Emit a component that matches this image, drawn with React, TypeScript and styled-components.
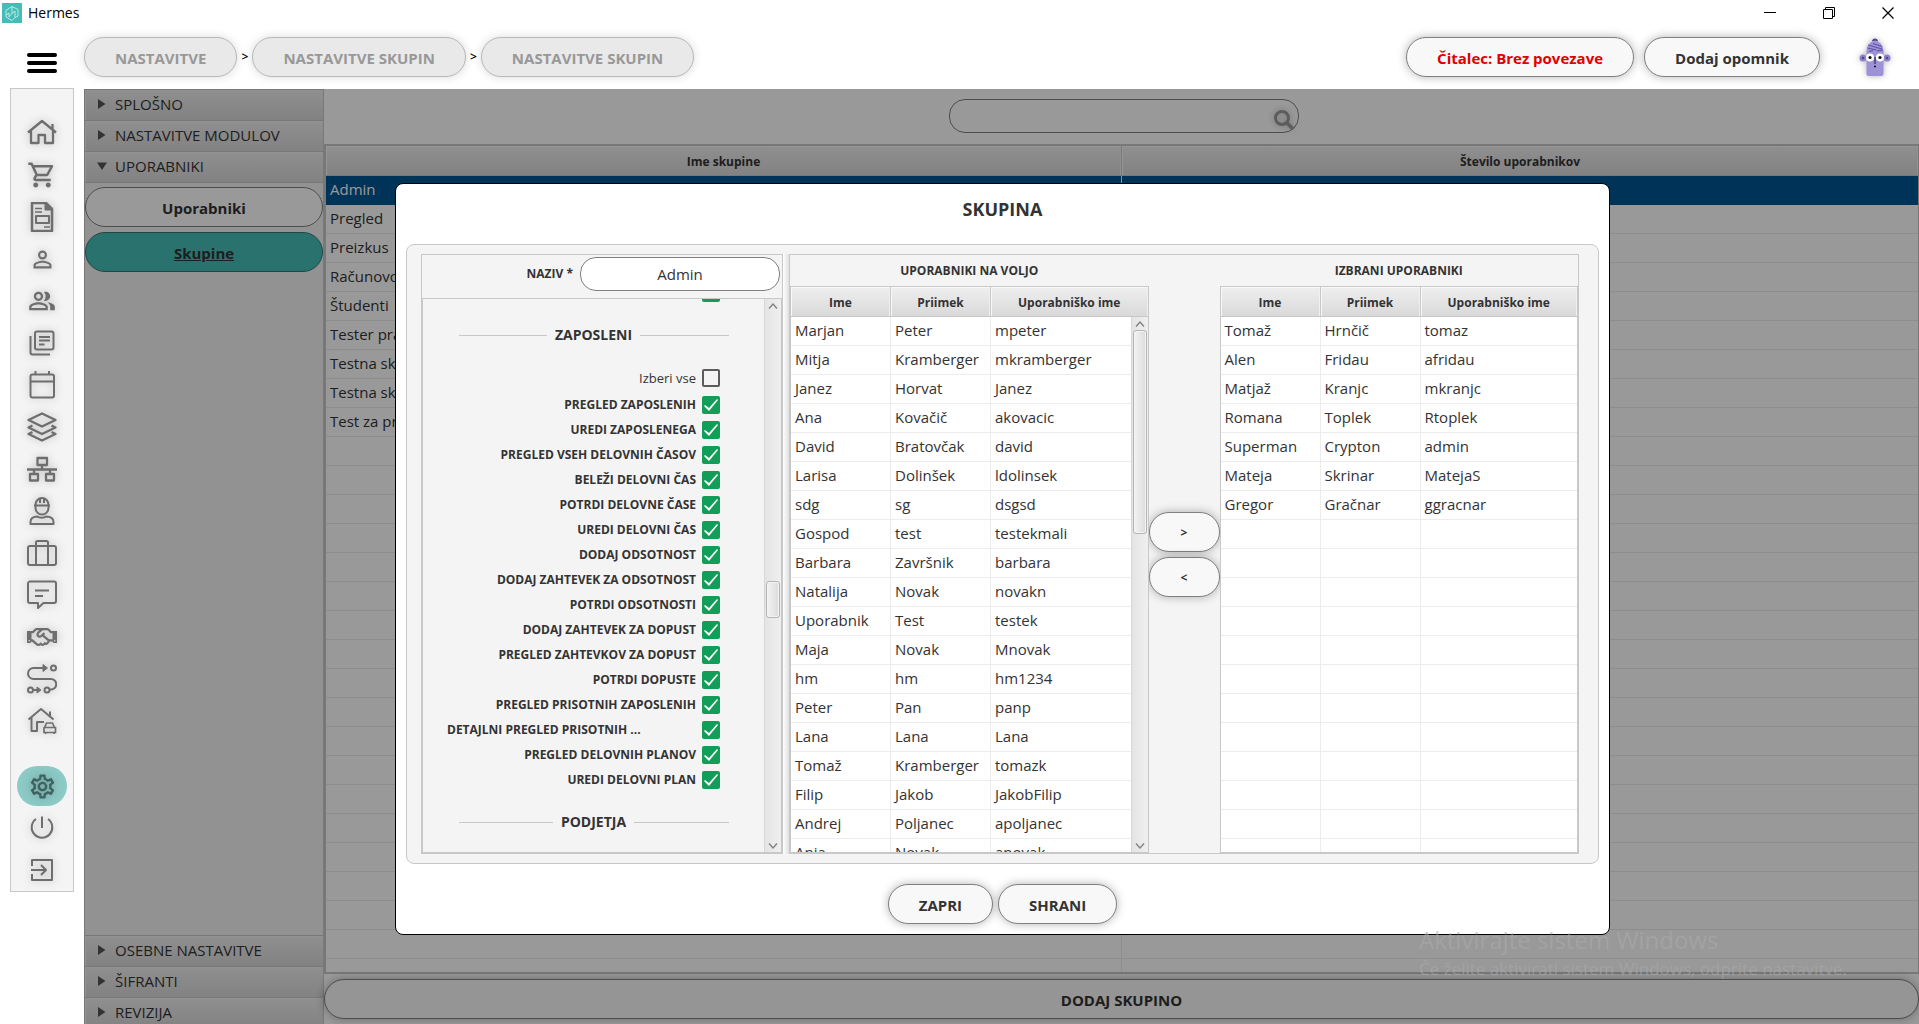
import React from "react";
import styled, { createGlobalStyle, css } from "styled-components";
import { FaRegHandshake } from "react-icons/fa";

const colors = {
  text: "#333333",
  line: "#c8c8c8",
  cellLine: "#ececec",
  panel: "#f4f4f4",
  teal: "#46beb6",
  selection: "#005593",
  green: "#129e58",
};

const headerGradient = "linear-gradient(#efefef, #d9d9d9)";

const GlobalStyle = createGlobalStyle`
  *, *::before, *::after { box-sizing: border-box; }
  body {
    margin: 0;
    background: #ffffff;
    color: ${colors.text};
    font-family: "Open Sans", "Noto Sans", sans-serif;
    font-size: 15px;
    line-height: 20px;
  }
  button, input { font: inherit; color: inherit; margin: 0; }
  button { cursor: pointer; }
`;

/* ---------- window frame ---------- */

const Window = styled.div`
  display: flex;
  flex-direction: column;
  height: 100vh;
  overflow: hidden;
`;

const TitleBar = styled.header`
  display: flex;
  align-items: center;
  justify-content: space-between;
  flex: none;
  height: 27px;
  padding: 0 25px 2px 2px;
`;

const AppName = styled.div`
  display: flex;
  align-items: center;
  gap: 6px;
  color: #000000;
  font-size: 14px;
`;

const WindowControls = styled.div`
  display: flex;
  gap: 47px;
`;

const WindowButton = styled.button`
  display: flex;
  padding: 0;
  border: 0;
  background: none;
  color: #000000;
`;

/* ---------- toolbar ---------- */

const Toolbar = styled.div`
  display: flex;
  align-items: center;
  flex: none;
  height: 62px;
  padding: 0 28px 2px 0;
`;

const MenuButton = styled.button`
  display: flex;
  flex-direction: column;
  gap: 4px;
  width: 30px;
  margin: 12px 27px 0;
  padding: 0;
  border: 0;
  background: none;
`;

const MenuBar = styled.span`
  height: 4px;
  border-radius: 2px;
  background: #000000;
`;

const Crumbs = styled.nav`
  display: flex;
  align-items: center;
  flex: 1;
`;

const CrumbArrow = styled.span`
  width: 15px;
  text-align: center;
  font-size: 12px;
  font-weight: 600;
  color: #000000;
`;

type PillTone = "normal" | "muted" | "alert" | "plain" | "active";

const pillTones = {
  normal: css`
    background: #f8f8f8;
    border-color: #808080;
    box-shadow: 0 0 10px rgba(0, 0, 0, 0.3);
  `,
  muted: css`
    background: #e9e9e9;
    border-color: #b8b8b8;
    color: #989898;
    box-shadow: 0 0 10px rgba(0, 0, 0, 0.15);
  `,
  alert: css`
    background: #f8f8f8;
    border-color: #808080;
    color: #e00000;
    box-shadow: 0 0 10px rgba(0, 0, 0, 0.3);
  `,
  plain: css`
    background: #ffffff;
    border-color: #808080;
  `,
  active: css`
    background: ${colors.teal};
    border-color: #3a7773;
    text-decoration: underline;
  `,
};

const Pill = styled.button<{ $tone?: PillTone }>`
  height: 40px;
  padding: 2px 30px 0;
  border: 1px solid;
  border-radius: 20px;
  font-weight: 700;
  white-space: nowrap;
  ${(p) => pillTones[p.$tone ?? "normal"]}
`;

const ToolbarActions = styled.div`
  display: flex;
  gap: 10px;
  margin-right: 39px;
`;

const AvatarButton = styled.button`
  display: flex;
  padding: 0;
  border: 0;
  background: none;
  filter: drop-shadow(0 0 3px rgba(0, 0, 0, 0.3));
`;

/* ---------- icon rail ---------- */

const Workspace = styled.div`
  display: flex;
  flex: 1;
  min-height: 0;
`;

const Rail = styled.nav`
  display: flex;
  flex-direction: column;
  align-items: center;
  align-self: flex-start;
  flex: none;
  width: 64px;
  margin: -1px 10px 0;
  padding-top: 23px;
  border: 1px solid ${colors.line};
  background: ${colors.panel};
`;

const RailButton = styled.button<{ $active?: boolean; $spaced?: boolean }>`
  display: flex;
  align-items: center;
  justify-content: center;
  width: 50px;
  height: 40px;
  margin: 1px 0;
  margin-top: ${(p) => (p.$spaced ? "24px" : "1px")};
  padding: 0;
  border: 0;
  border-radius: 20px;
  background: ${(p) => (p.$active ? "#8ccac6" : "none")};
  color: ${(p) => (p.$active ? "#3f6260" : "#6e6e6e")};

  svg {
    filter: drop-shadow(0 0 4px rgba(0, 0, 0, 0.25));
  }
`;

/* ---------- page behind the dialog ---------- */

const Page = styled.main`
  position: relative;
  display: flex;
  flex: 1;
  min-width: 0;
`;

const Accordion = styled.aside`
  display: flex;
  flex-direction: column;
  flex: none;
  width: 240px;
  margin-bottom: -4px;
  overflow: hidden;
  border: solid ${colors.line};
  border-width: 0 1px;
  background: ${colors.panel};
`;

const AccordionHeader = styled.button`
  display: flex;
  align-items: center;
  gap: 8px;
  flex: none;
  height: 31px;
  padding: 0 12px 2px;
  border: 0;
  border-top: 1px solid ${colors.line};
  background: ${headerGradient};
  box-shadow: inset 0 1px #f4f4f4, inset 1px 0 #f4f4f4;
  text-align: left;
`;

const AccordionBody = styled.div`
  display: flex;
  flex-direction: column;
  flex: 1;
  gap: 5px;
  padding-top: 4px;
  border-top: 1px solid ${colors.line};
`;

const GroupsPanel = styled.section`
  display: flex;
  flex-direction: column;
  flex: 1;
  min-width: 0;
  background: #ffffff;
`;

const SearchBar = styled.div`
  display: flex;
  justify-content: center;
  flex: none;
  padding: 10px 0 11px 5px;
`;

const SearchField = styled.div`
  position: relative;
  width: 350px;
`;

const RoundInput = styled.input`
  display: block;
  width: 100%;
  height: 34px;
  padding: 0 15px;
  border: 1px solid #808080;
  border-radius: 16px;
  background: #ffffff;
  text-align: center;
`;

const SearchButton = styled.button`
  position: absolute;
  right: 4px;
  top: 10px;
  display: flex;
  padding: 0;
  border: 0;
  background: none;
  color: #999999;
  filter: drop-shadow(0 0 3px rgba(0, 0, 0, 0.25));
`;

const GroupsFrame = styled.div`
  flex: 1;
  min-height: 0;
  overflow: hidden;
  border: 2px solid ${colors.line};
  border-right-width: 1px;
`;

const AddGroup = styled(Pill)`
  flex: none;
  margin: 5px 0;
`;

/* ---------- tables ---------- */

const Table = styled.table`
  width: 100%;
  table-layout: fixed;
  border-collapse: separate;
  border-spacing: 0;
  background: #ffffff;
`;

const HeadCell = styled.th<{ $width?: string }>`
  width: ${(p) => p.$width ?? "auto"};
  height: 30px;
  padding: 2px 0 0;
  border: solid ${colors.line};
  border-width: 0 1px 1px 0;
  background: ${headerGradient};
  box-shadow: inset 1px 1px #f8f8f8, inset -1px 0 #f0f0f0;
  font-size: 12px;
  font-weight: 700;
  text-align: center;

  &:last-child {
    border-right: 0;
  }
`;

const Cell = styled.td`
  height: 29px;
  padding: 0 4px 2px;
  border: solid ${colors.cellLine};
  border-width: 0 1px 1px 0;
  white-space: nowrap;

  &:last-child {
    border-right: 0;
  }
`;

const Row = styled.tr<{ $selected?: boolean }>`
  ${(p) =>
    p.$selected &&
    css`
      background: ${colors.selection};
      color: #ffffff;

      ${Cell} {
        border-bottom-color: ${colors.selection};
      }
    `}
`;

/* ---------- dialog ---------- */

const Backdrop = styled.div`
  position: absolute;
  inset: 0;
  display: flex;
  padding: 94px 309px 89px 311px;
  background: rgba(0, 0, 0, 0.4);
`;

const Dialog = styled.section`
  display: flex;
  flex-direction: column;
  flex: 1;
  min-width: 0;
  border: 1px solid #000000;
  border-radius: 8px;
  background: #ffffff;
`;

const DialogTitle = styled.h1`
  margin: 0;
  padding: 13px 0 23px;
  font-size: 18px;
  line-height: 24px;
  font-weight: 700;
  text-align: center;
`;

const GroupBox = styled.div`
  display: flex;
  flex: 1;
  min-height: 0;
  margin: 0 10px;
  padding: 9px 19px 9px 14px;
  border: 1px solid ${colors.line};
  border-radius: 8px;
  background: ${colors.panel};
`;

const RightsPane = styled.div`
  display: flex;
  flex-direction: column;
  flex: none;
  width: 362px;
  border: 1px solid ${colors.line};
`;

const Splitter = styled.div`
  flex: none;
  width: 6px;
  background: linear-gradient(90deg, #ffffff, #e0e0e0);
`;

const NameRow = styled.div`
  display: flex;
  align-items: center;
  justify-content: flex-end;
  gap: 7px;
  padding: 2px 2px 7px;
`;

const NameField = styled.div`
  width: 200px;
`;

const SmallLabel = styled.label`
  font-size: 12px;
  font-weight: 700;
`;

const ScrollPane = styled.div`
  display: flex;
  flex: 1;
  min-height: 0;
  border: 1px solid ${colors.line};
`;

const RightsList = styled.div`
  display: flex;
  flex-direction: column;
  justify-content: flex-end;
  flex: 1;
  overflow: hidden;
  padding-bottom: 20px;
`;

const SectionHeading = styled.h2`
  display: flex;
  align-items: center;
  align-self: center;
  flex: none;
  gap: 8px;
  width: 270px;
  margin: 23px 0 0;
  font-size: 14px;
  line-height: 20px;
  font-weight: 700;

  &::before,
  &::after {
    content: "";
    flex: 1;
    height: 1px;
    background: ${colors.line};
  }
`;

const CheckRows = styled.div`
  display: flex;
  flex-direction: column;
  flex: none;
  gap: 7px;
  padding: 0 44px 0 24px;
`;

const SectionRows = styled(CheckRows)`
  padding-top: 24px;
`;

const CheckRow = styled.div<{ $first?: boolean }>`
  display: flex;
  align-items: center;
  justify-content: flex-end;
  gap: 6px;
  height: 18px;
  margin-bottom: ${(p) => (p.$first ? "2px" : "0")};
`;

const CheckLabel = styled(SmallLabel)<{ $clipped?: boolean }>`
  ${(p) => p.$clipped && "flex: 1;"}
  white-space: nowrap;
`;

const PlainLabel = styled.label`
  font-size: 13px;
`;

const CheckBox = styled.input`
  appearance: none;
  flex: none;
  width: 18px;
  height: 18px;
  border: 2px solid #5c5c5c;
  border-radius: 2px;
  background: ${colors.panel};

  &:checked {
    border: 0;
    background: ${colors.green};
  }

  &:checked::after {
    content: "";
    display: block;
    height: 18px;
    background: #ffffff;
    clip-path: polygon(2px 10px, 3px 9px, 7px 12px, 15px 3px, 16px 4px, 7px 15px);
  }
`;

/* ---------- scroll bars ---------- */

const ScrollBar = styled.div`
  display: flex;
  flex-direction: column;
  flex: none;
  width: 17px;
  border-left: 1px solid #d8d8d8;
  background: linear-gradient(90deg, #e4e4e4, #efefef);
`;

const TableScrollBar = styled(ScrollBar)`
  position: absolute;
  top: 30px;
  right: 0;
  bottom: 0;
`;

const ScrollArrow = styled.button`
  display: flex;
  align-items: center;
  justify-content: center;
  flex: none;
  height: 13px;
  padding: 0;
  border: 0;
  background: none;
  color: #808080;
`;

const ScrollTrack = styled.div`
  flex: 1;
  min-height: 0;
`;

const ScrollLead = styled.div<{ $percent: number }>`
  height: ${(p) => p.$percent}%;
`;

const ScrollThumb = styled.div<{ $percent: number }>`
  height: ${(p) => p.$percent}%;
  margin: 0 1px;
  border: 1px solid #b4b4b4;
  border-radius: 3px;
  background: linear-gradient(90deg, #f2f2f2, #dcdcdc);
  box-shadow: inset 0 0 0 1px #f4f4f4;
`;

/* ---------- user transfer ---------- */

const TransferPane = styled.div`
  display: grid;
  grid-template-columns: 1fr 71px 1fr;
  flex: 1;
  min-width: 0;
  border: 1px solid ${colors.line};
`;

const UsersColumn = styled.div`
  display: flex;
  flex-direction: column;
  min-width: 0;
  min-height: 0;
`;

const UsersTitle = styled.h2`
  margin: 0;
  padding: 6px 0 5px;
  font-size: 12px;
  line-height: 20px;
  font-weight: 700;
  text-align: center;
`;

const UsersFrame = styled.div`
  position: relative;
  flex: 1;
  min-height: 0;
  overflow: hidden;
  border: 1px solid ${colors.line};
`;

const TransferButtons = styled.div`
  display: flex;
  flex-direction: column;
  justify-content: center;
  gap: 5px;
`;

const TransferButton = styled(Pill)`
  padding: 2px 0 0;
  font-size: 12px;
`;

const DialogActions = styled.div`
  display: flex;
  justify-content: center;
  gap: 5px;
  padding: 20px 0 10px;
`;

const Watermark = styled.div`
  position: absolute;
  right: 74px;
  bottom: 43px;
  width: 426px;
  color: rgba(170, 170, 170, 0.6);
  font-size: 17px;
  line-height: 24px;
  white-space: nowrap;
  pointer-events: none;
`;

const WatermarkTitle = styled.div`
  font-size: 24px;
  line-height: 34px;
`;

/* ---------- icons ---------- */

const Line = ({ children, size = 30, weight = 2 }: { children: React.ReactNode; size?: number; weight?: number }) => (
  <svg width={size} height={size} viewBox="0 0 30 30" fill="none" stroke="currentColor" strokeWidth={weight} strokeLinejoin="round" aria-hidden="true">
    {children}
  </svg>
);

const Solid = ({ d, size }: { d: string; size: number }) => (
  <svg width={size} height={size} viewBox="0 0 24 24" fill="currentColor" aria-hidden="true">
    <path d={d} />
  </svg>
);

const cartPath =
  "M15.55 13c.75 0 1.41-.41 1.75-1.03l3.58-6.49A.996.996 0 0 0 20.01 4H5.21l-.94-2H1v2h2l3.6 7.59-1.35 2.44C4.52 15.37 5.48 17 7 17h12v-2H7l1.1-2h7.45zM6.16 6h12.15l-2.76 5H8.53L6.16 6zM7 18c-1.1 0-1.99.9-1.99 2S5.9 22 7 22s2-.9 2-2-.9-2-2-2zm10 0c-1.1 0-1.99.9-1.99 2s.89 2 1.99 2 2-.9 2-2-.9-2-2-2z";
const personPath =
  "M12 5.9a2.1 2.1 0 1 1 0 4.2 2.1 2.1 0 0 1 0-4.2m0 9c2.97 0 6.1 1.46 6.1 2.1v1.1H5.9V17c0-.64 3.13-2.1 6.1-2.1M12 4C9.79 4 8 5.79 8 8s1.79 4 4 4 4-1.79 4-4-1.79-4-4-4zm0 9c-2.67 0-8 1.34-8 4v3h16v-3c0-2.66-5.33-4-8-4z";
const peoplePath =
  "M16.67 13.13C18.04 14.06 19 15.32 19 17v3h4v-3c0-2.18-3.57-3.47-6.33-3.87zM15 12c2.21 0 4-1.79 4-4s-1.79-4-4-4c-.47 0-.91.1-1.33.24a5.98 5.98 0 0 1 0 7.52c.42.14.86.24 1.33.24zM9 12c2.21 0 4-1.79 4-4s-1.79-4-4-4-4 1.79-4 4 1.79 4 4 4zm0-6c1.1 0 2 .9 2 2s-.9 2-2 2-2-.9-2-2 .9-2 2-2zm0 7c-2.67 0-8 1.34-8 4v3h16v-3c0-2.66-5.33-4-8-4zm6 5H3v-.99C3.2 16.29 6.3 15 9 15s5.8 1.29 6 2v1z";
const gearPath =
  "M19.43 12.98c.04-.32.07-.64.07-.98 0-.34-.03-.66-.07-.98l2.11-1.65c.19-.15.24-.42.12-.64l-2-3.46a.5.5 0 0 0-.61-.22l-2.49 1c-.52-.4-1.08-.73-1.69-.98l-.38-2.65A.488.488 0 0 0 14 2h-4c-.25 0-.46.18-.49.42l-.38 2.65c-.61.25-1.17.59-1.69.98l-2.49-1a.566.566 0 0 0-.18-.03c-.17 0-.34.09-.43.25l-2 3.46c-.13.22-.07.49.12.64l2.11 1.65c-.04.32-.07.65-.07.98s.03.66.07.98l-2.11 1.65c-.19.15-.24.42-.12.64l2 3.46a.5.5 0 0 0 .61.22l2.49-1c.52.4 1.08.73 1.69.98l.38 2.65c.03.24.24.42.49.42h4c.25 0 .46-.18.49-.42l.38-2.65c.61-.25 1.17-.59 1.69-.98l2.49 1c.06.02.12.03.18.03.17 0 .34-.09.43-.25l2-3.46c.12-.22.07-.49-.12-.64l-2.11-1.65zm-1.98-1.71c.04.31.05.52.05.73 0 .21-.02.43-.05.73l-.14 1.13.89.7 1.08.84-.7 1.21-1.27-.51-1.04-.42-.9.68c-.43.32-.84.56-1.25.73l-1.06.43-.16 1.13-.2 1.35h-1.4l-.19-1.35-.16-1.13-1.06-.43c-.43-.18-.83-.41-1.23-.71l-.91-.7-1.06.43-1.27.51-.7-1.21 1.08-.84.89-.7-.14-1.13c-.03-.31-.05-.54-.05-.74s.02-.43.05-.73l.14-1.13-.89-.7-1.08-.84.7-1.21 1.27.51 1.04.42.9-.68c.43-.32.84-.56 1.25-.73l1.06-.43.16-1.13.2-1.35h1.39l.19 1.35.16 1.13 1.06.43c.43.18.83.41 1.23.71l.91.7 1.06-.43 1.27-.51.7 1.21-1.07.85-.89.7.14 1.13zM12 8c-2.21 0-4 1.79-4 4s1.79 4 4 4 4-1.79 4-4-1.79-4-4-4zm0 6c-1.1 0-2-.9-2-2s.9-2 2-2 2 .9 2 2-.9 2-2 2z";

const railItems: { label: string; icon: React.ReactNode; active?: boolean; spaced?: boolean }[] = [
  {
    label: "Domov",
    icon: (
      <Line weight={2.3}>
        <path d="M1 14.500 15 3l14 11.500M25.500 11.500V6M4 12.500V25h7.500v-8h6.500v8H26V12.500" />
      </Line>
    ),
  },
  { label: "Prodaja", icon: <Solid d={cartPath} size={30} /> },
  {
    label: "Računi",
    icon: (
      <Line>
        <path d="M5 1h14l6 6v22H5z" strokeWidth="2.500" />
        <path d="M18 1v7h7z" fill="currentColor" strokeWidth="1" />
        <path d="M8 6.500h7M8 10h7M17 25h6" strokeWidth="1.500" />
        <path d="M9 14h13v7H9z" />
      </Line>
    ),
  },
  { label: "Oseba", icon: <Solid d={personPath} size={27} /> },
  { label: "Stranke", icon: <Solid d={peoplePath} size={28} /> },
  {
    label: "Dokumenti",
    icon: (
      <Line>
        <rect x="8" y="3.500" width="18.500" height="18" rx="2" />
        <path d="M3.500 8v16.500a2 2 0 0 0 2 2H23" />
        <path d="M12 9h11M12 12.500h11M12 16.500h5.500" />
      </Line>
    ),
  },
  {
    label: "Koledar",
    icon: (
      <Line>
        <rect x="3.500" y="4.500" width="23.500" height="23" rx="2" />
        <path d="M3.500 11.500h23.500M8.500 1v3.500M22 1v3.500" />
      </Line>
    ),
  },
  {
    label: "Zaloga",
    icon: (
      <Line weight={2.3}>
        <path d="M15 1.500 28.500 8 15 14.500 1.500 8z" />
        <path d="M5.500 13.500 1.500 15.500 15 22l13.500-6.500-4-2" />
        <path d="M5.500 20 1.500 22 15 28.500 28.500 22l-4-2" />
      </Line>
    ),
  },
  {
    label: "Organizacija",
    icon: (
      <Line weight={2.3}>
        <path d="M10.500 4h9.500v7h-9.500zM3 20h8v6.500H3zM19 20h8v6.500h-8zM0 15.500h30M15 11v4.500M7 15.500V20M23 15.500V20" />
      </Line>
    ),
  },
  {
    label: "Delavci",
    icon: (
      <Line>
        <path d="M8.500 10v2a6.500 6.500 0 0 0 13 0v-2M7 9.500h16M8.500 9a6.500 7 0 0 1 13 0M13 2v5M17 2v5" />
        <path d="M3.500 28v-2c0-4 3-5.500 7-5.500 1.500 1.500 7 1.500 8.500 0 4 0 7.500 1.500 7.500 5.500v2z" />
      </Line>
    ),
  },
  {
    label: "Projekti",
    icon: (
      <Line>
        <rect x="1" y="8" width="28" height="19" rx="2" />
        <path d="M9 27V4.500a1.500 1.500 0 0 1 1.500-1.500h9a1.500 1.500 0 0 1 1.500 1.500V27" />
      </Line>
    ),
  },
  {
    label: "Sporočila",
    icon: (
      <Line>
        <path d="M3 1.500h24a2 2 0 0 1 2 2V21a2 2 0 0 1-2 2H16.500L11 28v-5H3a2 2 0 0 1-2-2V3.500a2 2 0 0 1 2-2z" />
        <path d="M8 10.500h14M8 16h8" />
      </Line>
    ),
  },
  { label: "Pogodbe", icon: <FaRegHandshake size={30} /> },
  {
    label: "Procesi",
    icon: (
      <Line>
        <circle cx="26.500" cy="4" r="2.500" />
        <circle cx="3.500" cy="26" r="2.500" />
        <circle cx="20" cy="26" r="2.500" />
        <path d="M16 4H6.500a5.500 5.500 0 0 0 0 11H24a5 5 0 0 1 0 10.500h-1.500M7 26h3" />
        <path d="M16 .5 20.500 4 16 7.500zM10 23l4 3-4 3z" fill="currentColor" strokeWidth="1" />
      </Line>
    ),
  },
  {
    label: "Najem",
    icon: (
      <Line>
        <path d="M1.500 13.500 14 3l12.500 10.500M23 10V5.500M4.500 11.500V25H10v-9h7" />
        <path d="M17.500 21.500 19.500 17h6l2 4.500M17 21.500h11.500v5H17zM18.500 26.500V28M27 26.500V28" strokeWidth="1.700" />
      </Line>
    ),
  },
  { label: "Nastavitve", icon: <Solid d={gearPath} size={29} />, active: true, spaced: true },
  {
    label: "Izklop",
    icon: (
      <Line>
        <path d="M15 3.500V15M9 6a10.300 10.300 0 1 0 12 0" />
      </Line>
    ),
  },
  {
    label: "Odjava",
    icon: (
      <Line>
        <path d="M5 11V5h20v20H5v-6M4 15h15M14 10l5 5-5 5" />
      </Line>
    ),
  },
];

const Logo = () => (
  <svg width="20" height="20" viewBox="0 0 20 20" fill="none" stroke="#c9efec" strokeWidth="0.900" aria-hidden="true">
    <rect width="20" height="20" fill="#44bdb6" stroke="none" />
    <path d="M4 7.500 10 3.500v7L7 14V10l-3 2zM10 3.500l6 3V13l-3 1.500M10 10.500 13 8v6.500M4 12v2l6 3.500 3-3" />
  </svg>
);

const Avatar = () => (
  <svg width="32" height="38" viewBox="0 0 32 38" aria-hidden="true">
    <circle cx="4" cy="20" r="3.500" fill="#8d83c9" />
    <circle cx="28" cy="20" r="3.500" fill="#8d83c9" />
    <circle cx="4" cy="20" r="1.300" fill="#4d4390" />
    <circle cx="28" cy="20" r="1.300" fill="#4d4390" />
    <path d="M7.500 36V14c0-7 4-11 8.500-11s8.500 4 8.500 11v22c0 1-1 2-2 2H9.500c-1 0-2-1-2-2z" fill="#9d92d8" />
    <path d="M13 3.500c0-4 6-4 6 0-2-1-4-1-6 0z" fill="#4d4390" />
    <path d="M9 7l14 4M8.500 10l9 2M14 5.500l9 3M10 13.500l4-1M18 13l6-1" stroke="#5b50a3" strokeWidth="1" fill="none" />
    <circle cx="11" cy="19.500" r="4" fill="#ffffff" />
    <circle cx="21" cy="19.500" r="4" fill="#ffffff" />
    <circle cx="11" cy="19.500" r="1.600" fill="#111111" />
    <circle cx="21" cy="19.500" r="1.600" fill="#111111" />
    <path d="M16 19v7" stroke="#332c66" strokeWidth="1.200" />
    <path d="M15 28.500h2" stroke="#111111" strokeWidth="1.500" />
  </svg>
);

const Triangle = ({ open }: { open?: boolean }) => (
  <svg width="10" height="10" viewBox="0 0 10 10" fill="#555555" aria-hidden="true">
    {open ? <path d="M0 1.500h10L5 9z" /> : <path d="M1 0v10l7.500-5z" />}
  </svg>
);

const Chevron = ({ down }: { down?: boolean }) => (
  <svg width="10" height="6" viewBox="0 0 10 6" fill="none" stroke="currentColor" strokeWidth="1.300" aria-hidden="true">
    {down ? <path d="M1 .5 5 5 9 .5" /> : <path d="M1 5.500 5 1l4 4.500" />}
  </svg>
);

/* ---------- data ---------- */

const groups = [
  "Admin",
  "Pregled",
  "Preizkus",
  "Računovodstvo",
  "Študenti",
  "Tester pravic",
  "Testna skupina",
  "Testna skupina",
  "Test za pravice",
];

const rights = [
  "PREGLED ZAPOSLENIH",
  "UREDI ZAPOSLENEGA",
  "PREGLED VSEH DELOVNIH ČASOV",
  "BELEŽI DELOVNI ČAS",
  "POTRDI DELOVNE ČASE",
  "UREDI DELOVNI ČAS",
  "DODAJ ODSOTNOST",
  "DODAJ ZAHTEVEK ZA ODSOTNOST",
  "POTRDI ODSOTNOSTI",
  "DODAJ ZAHTEVEK ZA DOPUST",
  "PREGLED ZAHTEVKOV ZA DOPUST",
  "POTRDI DOPUSTE",
  "PREGLED PRISOTNIH ZAPOSLENIH",
  "DETAJLNI PREGLED PRISOTNIH ...",
  "PREGLED DELOVNIH PLANOV",
  "UREDI DELOVNI PLAN",
];

type User = [string, string, string];

const availableUsers: User[] = [
  ["Marjan", "Peter", "mpeter"],
  ["Mitja", "Kramberger", "mkramberger"],
  ["Janez", "Horvat", "Janez"],
  ["Ana", "Kovačič", "akovacic"],
  ["David", "Bratovčak", "david"],
  ["Larisa", "Dolinšek", "ldolinsek"],
  ["sdg", "sg", "dsgsd"],
  ["Gospod", "test", "testekmali"],
  ["Barbara", "Završnik", "barbara"],
  ["Natalija", "Novak", "novakn"],
  ["Uporabnik", "Test", "testek"],
  ["Maja", "Novak", "Mnovak"],
  ["hm", "hm", "hm1234"],
  ["Peter", "Pan", "panp"],
  ["Lana", "Lana", "Lana"],
  ["Tomaž", "Kramberger", "tomazk"],
  ["Filip", "Jakob", "JakobFilip"],
  ["Andrej", "Poljanec", "apoljanec"],
  ["Anja", "Novak", "anovak"],
];

const chosenUsers: User[] = [
  ["Tomaž", "Hrnčič", "tomaz"],
  ["Alen", "Fridau", "afridau"],
  ["Matjaž", "Kranjc", "mkranjc"],
  ["Romana", "Toplek", "Rtoplek"],
  ["Superman", "Crypton", "admin"],
  ["Mateja", "Skrinar", "MatejaS"],
  ["Gregor", "Gračnar", "ggracnar"],
];

const blanks = (count: number) => Array.from({ length: Math.max(0, count) }, (_, i) => i);

/* ---------- parts ---------- */

const ScrollParts = ({ lead, thumb }: { lead: number; thumb: number }) => (
  <>
    <ScrollArrow type="button" aria-label="Pomakni gor">
      <Chevron />
    </ScrollArrow>
    <ScrollTrack>
      <ScrollLead $percent={lead} />
      <ScrollThumb $percent={thumb} />
    </ScrollTrack>
    <ScrollArrow type="button" aria-label="Pomakni dol">
      <Chevron down />
    </ScrollArrow>
  </>
);

const UserTable = ({ title, users, scrolls }: { title: string; users: User[]; scrolls?: boolean }) => (
  <UsersColumn>
    <UsersTitle>{title}</UsersTitle>
    <UsersFrame>
      <Table aria-label={title}>
        <thead>
          <tr>
            <HeadCell $width="100px">Ime</HeadCell>
            <HeadCell $width="100px">Priimek</HeadCell>
            <HeadCell>Uporabniško ime</HeadCell>
          </tr>
        </thead>
        <tbody>
          {users.map((user) => (
            <Row key={user[2]}>
              {user.map((value, i) => (
                <Cell key={i}>{value}</Cell>
              ))}
            </Row>
          ))}
          {blanks(19 - users.length).map((i) => (
            <Row key={i}>
              <Cell />
              <Cell />
              <Cell />
            </Row>
          ))}
        </tbody>
      </Table>
      {scrolls && (
        <TableScrollBar>
          <ScrollParts lead={0} thumb={40} />
        </TableScrollBar>
      )}
    </UsersFrame>
  </UsersColumn>
);

const RightsChecklist = () => (
  <ScrollPane>
    <RightsList>
      <CheckRows>
        <CheckRow>
          <CheckBox type="checkbox" defaultChecked aria-label="Predhodna pravica" />
        </CheckRow>
      </CheckRows>
      <SectionHeading>ZAPOSLENI</SectionHeading>
      <SectionRows>
        <CheckRow $first>
          <PlainLabel htmlFor="select-all">Izberi vse</PlainLabel>
          <CheckBox type="checkbox" id="select-all" />
        </CheckRow>
        {rights.map((right, i) => (
          <CheckRow key={right}>
            <CheckLabel htmlFor={`right-${i}`} $clipped={right.endsWith("...")}>
              {right}
            </CheckLabel>
            <CheckBox type="checkbox" id={`right-${i}`} defaultChecked />
          </CheckRow>
        ))}
      </SectionRows>
      <SectionHeading>PODJETJA</SectionHeading>
    </RightsList>
    <ScrollBar>
      <ScrollParts lead={51} thumb={7} />
    </ScrollBar>
  </ScrollPane>
);

const GroupDialog = () => (
  <Backdrop>
    <Dialog role="dialog" aria-labelledby="dialog-title">
      <DialogTitle id="dialog-title">SKUPINA</DialogTitle>
      <GroupBox>
        <RightsPane>
          <NameRow>
            <SmallLabel htmlFor="group-name">NAZIV *</SmallLabel>
            <NameField>
              <RoundInput id="group-name" type="text" defaultValue="Admin" />
            </NameField>
          </NameRow>
          <RightsChecklist />
        </RightsPane>
        <Splitter />
        <TransferPane>
          <UserTable title="UPORABNIKI NA VOLJO" users={availableUsers} scrolls />
          <TransferButtons>
            <TransferButton type="button">&gt;</TransferButton>
            <TransferButton type="button">&lt;</TransferButton>
          </TransferButtons>
          <UserTable title="IZBRANI UPORABNIKI" users={chosenUsers} />
        </TransferPane>
      </GroupBox>
      <DialogActions>
        <Pill type="button">ZAPRI</Pill>
        <Pill type="button">SHRANI</Pill>
      </DialogActions>
    </Dialog>
  </Backdrop>
);

export default function App() {
  return (
    <>
      <GlobalStyle />
      <Window>
        <TitleBar>
          <AppName>
            <Logo />
            Hermes
          </AppName>
          <WindowControls>
            <WindowButton type="button" aria-label="Pomanjšaj">
              <svg width="12" height="12" viewBox="0 0 12 12" stroke="currentColor">
                <path d="M0 5.500h12" />
              </svg>
            </WindowButton>
            <WindowButton type="button" aria-label="Obnovi">
              <svg width="12" height="12" viewBox="0 0 12 12" fill="none" stroke="currentColor">
                <path d="M.5 2.500h9v9h-9zM2.500 2.500v-2h9v9h-2" />
              </svg>
            </WindowButton>
            <WindowButton type="button" aria-label="Zapri okno">
              <svg width="12" height="12" viewBox="0 0 12 12" stroke="currentColor" strokeWidth="1.200">
                <path d="M.5.5l11 11M11.500.5l-11 11" />
              </svg>
            </WindowButton>
          </WindowControls>
        </TitleBar>

        <Toolbar>
          <MenuButton type="button" aria-label="Meni">
            <MenuBar />
            <MenuBar />
            <MenuBar />
          </MenuButton>
          <Crumbs>
            <Pill type="button" $tone="muted">NASTAVITVE</Pill>
            <CrumbArrow>&gt;</CrumbArrow>
            <Pill type="button" $tone="muted">NASTAVITVE SKUPIN</Pill>
            <CrumbArrow>&gt;</CrumbArrow>
            <Pill type="button" $tone="muted">NASTAVITVE SKUPIN</Pill>
          </Crumbs>
          <ToolbarActions>
            <Pill type="button" $tone="alert">Čitalec: Brez povezave</Pill>
            <Pill type="button">Dodaj opomnik</Pill>
          </ToolbarActions>
          <AvatarButton type="button" aria-label="Uporabnik">
            <Avatar />
          </AvatarButton>
        </Toolbar>

        <Workspace>
          <Rail>
            {railItems.map((item) => (
              <RailButton key={item.label} type="button" aria-label={item.label} $active={item.active} $spaced={item.spaced}>
                {item.icon}
              </RailButton>
            ))}
          </Rail>

          <Page>
            <Accordion>
              <AccordionHeader type="button"><Triangle />SPLOŠNO</AccordionHeader>
              <AccordionHeader type="button"><Triangle />NASTAVITVE MODULOV</AccordionHeader>
              <AccordionHeader type="button"><Triangle open />UPORABNIKI</AccordionHeader>
              <AccordionBody>
                <Pill type="button" $tone="plain">Uporabniki</Pill>
                <Pill type="button" $tone="active">Skupine</Pill>
              </AccordionBody>
              <AccordionHeader type="button"><Triangle />OSEBNE NASTAVITVE</AccordionHeader>
              <AccordionHeader type="button"><Triangle />ŠIFRANTI</AccordionHeader>
              <AccordionHeader type="button"><Triangle />REVIZIJA</AccordionHeader>
            </Accordion>

            <GroupsPanel>
              <SearchBar>
                <SearchField>
                  <RoundInput type="text" aria-label="Iskanje" />
                  <SearchButton type="button" aria-label="Išči">
                    <svg width="22" height="22" viewBox="0 0 22 22" fill="none" stroke="currentColor" strokeWidth="3" aria-hidden="true">
                      <circle cx="9" cy="9" r="6.500" />
                      <path d="M13.500 13.500 20 20" strokeWidth="3.500" />
                    </svg>
                  </SearchButton>
                </SearchField>
              </SearchBar>
              <GroupsFrame>
                <Table>
                  <thead>
                    <tr>
                      <HeadCell>Ime skupine</HeadCell>
                      <HeadCell>Število uporabnikov</HeadCell>
                    </tr>
                  </thead>
                  <tbody>
                    {groups.map((name, i) => (
                      <Row key={i} $selected={i === 0}>
                        <Cell>{name}</Cell>
                        <Cell />
                      </Row>
                    ))}
                    {blanks(19).map((i) => (
                      <Row key={i}>
                        <Cell />
                        <Cell />
                      </Row>
                    ))}
                  </tbody>
                </Table>
              </GroupsFrame>
              <AddGroup type="button">DODAJ SKUPINO</AddGroup>
            </GroupsPanel>

            <GroupDialog />
            <Watermark>
              <WatermarkTitle>Aktivirajte sistem Windows</WatermarkTitle>
              Če želite aktivirati sistem Windows, odprite nastavitve.
            </Watermark>
          </Page>
        </Workspace>
      </Window>
    </>
  );
}
